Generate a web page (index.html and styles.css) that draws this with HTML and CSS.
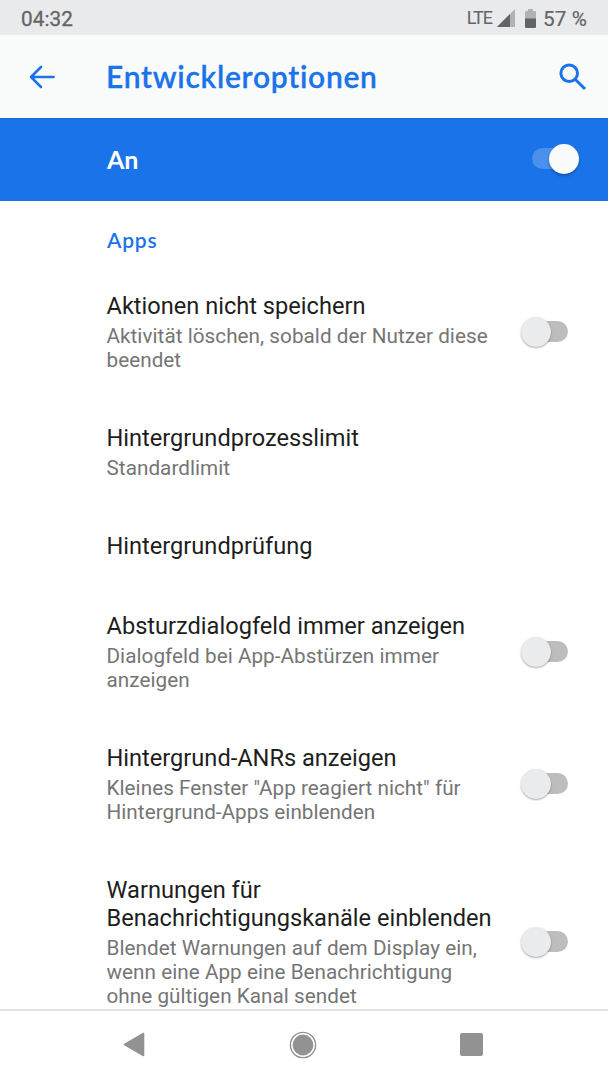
FILE: index.html
```html
<!DOCTYPE html>
<html lang="de">
<head>
<meta charset="utf-8">
<title>Entwickleroptionen</title>
<link rel="stylesheet" href="styles.css">
</head>
<body>
<div class="screen">
  <header class="status">
    <span class="clock">04:32</span>
    <span class="network">LTE</span>
    <svg class="signal" width="18" height="18" viewBox="0 0 18 18"><path d="M18 0V18H0Z" fill="#b1b2b3"/><path d="M13 5V18H0Z" fill="#636465"/></svg>
    <svg class="battery" width="11" height="19" viewBox="0 0 11 19"><path d="M3 0H8V2H10Q11 2 11 3V10H0V3Q0 2 1 2H3Z" fill="#b1b2b3"/><path d="M0 9.5H11V18Q11 19 10 19H1Q0 19 0 18Z" fill="#636465"/></svg>
    <span class="percent">57 %</span>
  </header>
  <div class="toolbar">
    <svg class="back" width="26" height="24" viewBox="0 0 26 24" fill="none" stroke="#1a73e8" stroke-width="2.6" stroke-linecap="round" stroke-linejoin="round"><path d="M12 2 2 12 12 22M2 12H24.6"/></svg>
    <h1>Entwickleroptionen</h1>
    <svg class="search" width="28" height="28" viewBox="0 0 28 28" fill="none" stroke="#1a73e8" stroke-width="3"><circle cx="10.2" cy="10.2" r="8.3"/><path d="M16.2 16.2 26 26"/></svg>
  </div>
  <div class="master"><span>An</span><i class="switch on"></i></div>
  <main>
    <h2>Apps</h2>
    <section class="row"><div class="text"><h3>Aktionen nicht speichern</h3><p>Aktivität löschen, sobald der Nutzer diese<br>beendet</p></div><i class="switch"></i></section>
    <section class="row"><div class="text"><h3>Hintergrundprozesslimit</h3><p>Standardlimit</p></div></section>
    <section class="row"><div class="text"><h3>Hintergrundprüfung</h3></div></section>
    <section class="row"><div class="text"><h3>Absturzdialogfeld immer anzeigen</h3><p>Dialogfeld bei App-Abstürzen immer<br>anzeigen</p></div><i class="switch"></i></section>
    <section class="row"><div class="text"><h3>Hintergrund-ANRs anzeigen</h3><p>Kleines Fenster "App reagiert nicht" für<br>Hintergrund-Apps einblenden</p></div><i class="switch"></i></section>
    <section class="row"><div class="text"><h3>Warnungen für<br>Benachrichtigungskanäle einblenden</h3><p>Blendet Warnungen auf dem Display ein,<br>wenn eine App eine Benachrichtigung<br>ohne gültigen Kanal sendet</p></div><i class="switch"></i></section>
  </main>
  <nav>
    <svg width="22" height="25" viewBox="0 0 22 25"><path d="M20.5 1.5V23.5L1.5 12.5Z" fill="#929292" stroke="#929292" stroke-width="1.6" stroke-linejoin="round"/></svg>
    <svg width="28" height="28" viewBox="0 0 28 28"><circle cx="14" cy="14" r="12.6" fill="none" stroke="#929292" stroke-width="1.4"/><circle cx="14" cy="14" r="10.4" fill="#929292"/></svg>
    <svg width="23" height="23" viewBox="0 0 23 23"><rect width="23" height="23" rx="2" fill="#929292"/></svg>
  </nav>
</div>
</body>
</html>
```
FILE: styles.css
```css
* { box-sizing: border-box; }
body { margin: 0; background: #fff; font-family: Roboto, sans-serif; }
h1, h2, h3, p { margin: 0; font-weight: 400; }
svg { display: block; flex: none; }

.screen { width: 608px; height: 1080px; display: flex; flex-direction: column; overflow: hidden; }

.status { flex: none; height: 35px; padding: 1px 21px 0 21px; display: flex; align-items: center; background: #e9eaec; color: #646566; font-size: 20.7px; }
.clock { flex: 1; padding-top: 1px; letter-spacing: .1px; -webkit-text-stroke: .3px #646566; }
.network { padding-bottom: 2px; font-size: 18px; letter-spacing: -1px; }
.signal { margin: 0 10.5px 0 4.5px; }
.percent { margin-left: 7px; padding-top: 1px; letter-spacing: .1px; -webkit-text-stroke: .2px #646566; }

.toolbar { flex: none; height: 83px; padding: 0 21px 0 29px; display: flex; align-items: center; background: #f9fbfa; color: #1a73e8; }
.toolbar h1 { flex: 1; margin-left: 51px; padding-bottom: 2px; font-family: Lato, sans-serif; font-size: 30px; font-weight: 600; line-height: 36px; letter-spacing: .73px; font-variant-ligatures: none; -webkit-text-stroke: .3px #1a73e8; }

.master { flex: none; height: 83px; padding: 0 29px 2px 107px; display: flex; align-items: center; justify-content: space-between; background: #1a73e8; border-top: 1px solid #1768d2; color: #fff; font-family: Lato, sans-serif; font-size: 25px; font-weight: 700; }

main { flex: 1; min-height: 0; overflow: hidden; }
h2 { height: 65.4px; padding: 25px 0 0 107px; color: #1a73e8; font-family: Lato, sans-serif; font-size: 21px; font-weight: 600; line-height: 28px; letter-spacing: .8px; }

.row { display: flex; align-items: center; justify-content: space-between; padding: 25.85px 40px 25.85px 106.5px; }
.text { white-space: nowrap; }
h3 { padding-top: 1px; color: #1d1e20; font-size: 23.6px; line-height: 27.7px; letter-spacing: 0; }
p { margin-top: 3.3px; color: #757575; font-size: 20.7px; line-height: 24.2px; letter-spacing: .04px; }
h3:only-child { margin-bottom: -1px; }

.switch { position: relative; flex: none; width: 47px; height: 30px; }
.switch::before { content: ""; position: absolute; left: 12px; right: 0; top: 4px; height: 21px; border-radius: 11px; background: #bdbdbd; }
.switch::after { content: ""; position: absolute; left: 0; top: 0; width: 30px; height: 30px; border-radius: 50%; background: #e9ebed; box-shadow: 0 1px 2px rgba(0, 0, 0, .35); }
.switch.on::before { left: 0; right: 12px; background: #4a90ed; }
.switch.on::after { left: auto; right: 0; background: #fafcfb; box-shadow: 0 2px 3px rgba(0, 0, 0, .25); }

nav { flex: none; height: 71px; padding: 0 125px 2px 123px; border-top: 2px solid #e2e2e2; display: flex; align-items: center; justify-content: space-between; background: #fff; }
```
